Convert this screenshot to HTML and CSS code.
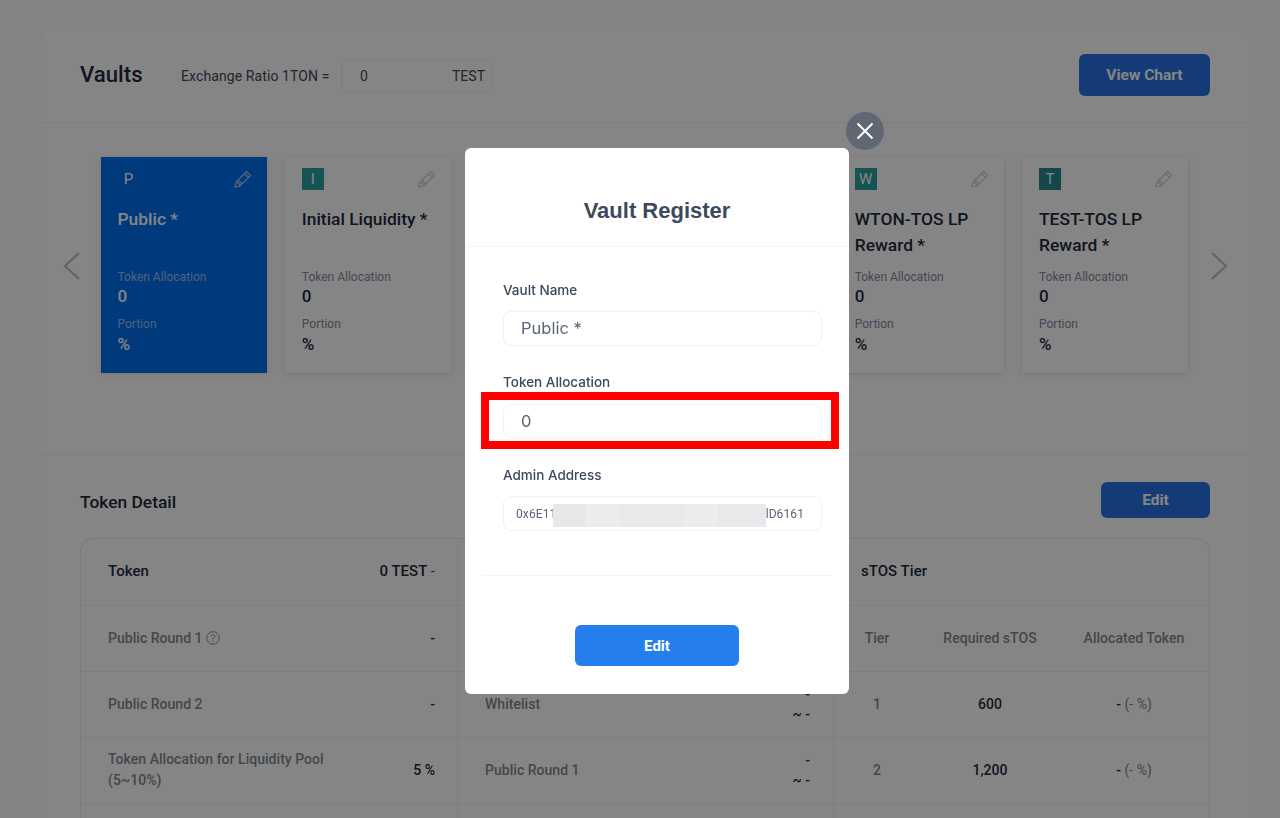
FILE: index.html
```html
<!DOCTYPE html>
<html lang="en">
<head>
    <meta charset="UTF-8">
    <meta name="viewport" content="width=device-width, initial-scale=1.0">
    <title>Vaults</title>
    <link rel="stylesheet" href="styles.css">
</head>
<body>

    <div class="panel">
        <!-- Vaults header -->
        <div class="vault-head">
            <h2 class="page-title">Vaults</h2>
            <span class="ratio-label">Exchange Ratio 1TON =</span>
            <div class="ratio-input"><span>0</span><span>TEST</span></div>
            <button class="btn-primary btn-chart">View Chart</button>
        </div>

        <!-- Vault cards -->
        <div class="carousel">
            <svg class="arrow" width="18" height="30" viewBox="0 0 18 30"><path d="M16 2 L2 15 L16 28" /></svg>
            <div class="cards">
                <div class="card card-active">
                    <div class="card-top">
                        <span class="badge">P</span>
                        <svg class="pencil" width="20" height="20" viewBox="0 0 20 20"><path d="M13.5 2.5 L17.5 6.5 L7 17 L2 18 L3 13 Z M11.5 4.5 L15.5 8.500 M5 11 L9 15 M3.500 12.500 L7.500 16.500" /></svg>
                    </div>
                    <div class="card-name">Public *</div>
                    <div class="card-label">Token Allocation</div>
                    <div class="card-value">0</div>
                    <div class="card-label card-label-second">Portion</div>
                    <div class="card-value">%</div>
                </div>
                <div class="card">
                    <div class="card-top">
                        <span class="badge">I</span>
                        <svg class="pencil" width="20" height="20" viewBox="0 0 20 20"><path d="M13.5 2.5 L17.5 6.5 L7 17 L2 18 L3 13 Z M11.5 4.5 L15.5 8.500 M5 11 L9 15 M3.500 12.500 L7.500 16.500" /></svg>
                    </div>
                    <div class="card-name">Initial Liquidity *</div>
                    <div class="card-label">Token Allocation</div>
                    <div class="card-value">0</div>
                    <div class="card-label card-label-second">Portion</div>
                    <div class="card-value">%</div>
                </div>
                <!-- these two sit behind the modal -->
                <div class="card"></div>
                <div class="card"></div>
                <div class="card">
                    <div class="card-top">
                        <span class="badge">W</span>
                        <svg class="pencil" width="20" height="20" viewBox="0 0 20 20"><path d="M13.5 2.5 L17.5 6.5 L7 17 L2 18 L3 13 Z M11.5 4.5 L15.5 8.500 M5 11 L9 15 M3.500 12.500 L7.500 16.500" /></svg>
                    </div>
                    <div class="card-name">WTON-TOS LP Reward *</div>
                    <div class="card-label">Token Allocation</div>
                    <div class="card-value">0</div>
                    <div class="card-label card-label-second">Portion</div>
                    <div class="card-value">%</div>
                </div>
                <div class="card">
                    <div class="card-top">
                        <span class="badge badge-dark">T</span>
                        <svg class="pencil" width="20" height="20" viewBox="0 0 20 20"><path d="M13.5 2.5 L17.5 6.5 L7 17 L2 18 L3 13 Z M11.5 4.5 L15.5 8.500 M5 11 L9 15 M3.500 12.500 L7.500 16.500" /></svg>
                    </div>
                    <div class="card-name">TEST-TOS LP Reward *</div>
                    <div class="card-label">Token Allocation</div>
                    <div class="card-value">0</div>
                    <div class="card-label card-label-second">Portion</div>
                    <div class="card-value">%</div>
                </div>
            </div>
            <svg class="arrow arrow-next" width="18" height="30" viewBox="0 0 18 30"><path d="M2 2 L16 15 L2 28" /></svg>
        </div>

        <!-- Token detail -->
        <div class="detail">
            <div class="detail-head">
                <h3 class="detail-title">Token Detail</h3>
                <button class="btn-primary btn-edit">Edit</button>
            </div>
            <div class="table">
                <div class="col col-token">
                    <div class="row row-head"><span class="strong">Token</span><span class="strong">0 TEST <span class="muted">-</span></span></div>
                    <div class="row"><span class="muted-label">Public Round 1
                        <svg class="help" width="14" height="14" viewBox="0 0 14 14"><circle cx="7" cy="7" r="6.300" /><path d="M5.200 5.400 C5.300 3.300 8.800 3.300 8.800 5.400 C8.800 6.800 7 6.800 7 8.500 M7 9.800 L7 10.800" /></svg></span><span class="strong">-</span></div>
                    <div class="row"><span class="muted-label">Public Round 2</span><span class="strong">-</span></div>
                    <div class="row"><span class="muted-label wide">Token Allocation for Liquidity Pool (5~10%)</span><span class="strong">5 %</span></div>
                </div>
                <div class="col col-sale">
                    <div class="row row-head"></div>
                    <div class="row"></div>
                    <div class="row"><span class="muted-label">Whitelist</span><span class="strong date">-<br>~ -</span></div>
                    <div class="row"><span class="muted-label">Public Round 1</span><span class="strong date">-<br>~ -</span></div>
                </div>
                <div class="col col-tier">
                    <div class="row row-head"><span class="strong">sTOS Tier</span></div>
                    <div class="row tier-row muted-label"><span>Tier</span><span>Required sTOS</span><span>Allocated Token</span></div>
                    <div class="row tier-row"><span class="muted-label">1</span><span class="strong">600</span><span><span class="strong">-</span> <span class="percent">(- %)</span></span></div>
                    <div class="row tier-row"><span class="muted-label">2</span><span class="strong">1,200</span><span><span class="strong">-</span> <span class="percent">(- %)</span></span></div>
                </div>
            </div>
        </div>
    </div>

    <!-- Vault Register modal -->
    <div class="overlay">
        <div class="modal">
            <button class="close-btn">
                <svg width="18" height="18" viewBox="0 0 18 18"><path d="M1.500 1.500 L16.500 16.500 M16.500 1.500 L1.500 16.500" /></svg>
            </button>
            <h2 class="modal-title">Vault Register</h2>
            <div class="modal-body">
                <label class="field-label">Vault Name</label>
                <div class="field">Public *</div>
                <label class="field-label">Token Allocation</label>
                <div class="field field-marked">0<span class="red-box"></span></div>
                <label class="field-label">Admin Address</label>
                <div class="field field-address"><span>0x6E11</span><span class="blurred"></span><span>lD6161</span></div>
            </div>
            <div class="modal-foot">
                <button class="btn-submit">Edit</button>
            </div>
        </div>
    </div>

</body>
</html>
```

FILE: styles.css
```css
* {
    box-sizing: border-box;
}
html, body {
    margin: 0;
    height: 818px;
    overflow: hidden;
}
body {
    font-family: Roboto, "Liberation Sans", sans-serif;
    background-color: #fafefc;
    color: #3d495d;
    padding: 30px 32px 0 42px;
}
button {
    font-family: inherit;
    border: none;
    color: white;
    font-weight: 700;
    cursor: pointer;
}
.panel {
    background: #ffffff;
    width: 1206px;
    height: 788px;
    border-radius: 12px 12px 0 0;
}

/* header */
.vault-head {
    height: 93px;
    display: flex;
    align-items: center;
    padding: 0 38px;
    border-bottom: 1px solid #eff1f6;
}
.page-title {
    margin: 0;
    width: 101px;
    font-size: 22.200px;
    font-weight: 500;
    color: #1f2a3c;
    position: relative;
    top: -2px;
}
.ratio-label {
    width: 160px;
    font-size: 14px;
    letter-spacing: 0.1px;
    color: #3d495d;
}
.ratio-input {
    width: 151px;
    height: 34px;
    border: 1px solid #eff1f6;
    border-radius: 6px;
    display: flex;
    justify-content: space-between;
    align-items: center;
    padding: 0 6px 0 18px;
    font-size: 14px;
    color: #3d495d;
}
.btn-primary {
    background-color: #2a72e5;
    border-radius: 6px;
    font-size: 15.500px;
}
.btn-chart {
    margin-left: auto;
    width: 131px;
    height: 42px;
    margin-top: -2px;
}

/* cards */
.carousel {
    height: 332px;
    display: flex;
    align-items: flex-start;
    padding: 34px 21px 0;
    border-bottom: 1px solid #eff1f6;
    gap: 19.500px;
}
.arrow {
    margin-top: 94px;
    flex: none;
}
.arrow-next {
    margin-left: 3px;
}
.arrow path {
    fill: none;
    stroke: #b8bcc9;
    stroke-width: 2;
}
.cards {
    display: flex;
    gap: 18.300px;
    flex: none;
}
.card {
    width: 166px;
    height: 216px;
    flex: none;
    padding: 11px 17px;
    background: white;
    box-shadow: 0 1px 6px rgba(61, 73, 93, 0.16);
    color: #1f2a3c;
}
.card-active {
    background: #0070ed;
    color: #fff;
}
.card-top {
    height: 22px;
    display: flex;
    justify-content: space-between;
    align-items: center;
}
.badge {
    width: 22px;
    height: 22px;
    background: #2ba1a0;
    color: #fff;
    font-size: 15px;
    display: flex;
    align-items: center;
    justify-content: center;
}
.badge-dark {
    background: #26898f;
}
.card-active .badge {
    background: transparent;
}
.pencil {
    margin-right: -3px;
}
.pencil path {
    fill: none;
    stroke: #c9cdd5;
    stroke-width: 1.200;
}
.card-active .pencil path {
    stroke: #b5c4dc;
}
.card-name {
    margin-top: 16px;
    height: 52px;
    font-size: 17.400px;
    font-weight: 500;
    line-height: 26px;
    margin-bottom: 11px;
}
.card-label {
    font-size: 12px;
    line-height: 16px;
    color: #7e8a9e;
}
.card-active .card-label {
    color: #97bdf0;
}
.card-label-second {
    margin-top: 9px;
    margin-bottom: 1px;
}
.card-value {
    font-size: 17px;
    font-weight: 500;
    line-height: 22px;
}

/* token detail */
.detail {
    padding: 0 38px;
}
.detail-head {
    height: 83px;
    display: flex;
    justify-content: space-between;
    align-items: center;
    padding-top: 6px;
}
.detail-title {
    margin: 4px 0 0;
    font-size: 17.400px;
    font-weight: 500;
    color: #1f2a3c;
}
.btn-edit {
    width: 109px;
    height: 36px;
}
.table {
    display: grid;
    grid-template-columns: 376px 376px 1fr;
    height: 280px;
    border: 1px solid #e6eaee;
    border-bottom: none;
    border-radius: 14px 14px 0 0;
}
.col + .col {
    border-left: 1px solid #eff1f6;
}
.row {
    height: 66px;
    display: flex;
    justify-content: space-between;
    align-items: center;
    padding: 0 22px 2px 27px;
    border-bottom: 1px solid #eff1f6;
    font-size: 14px;
    letter-spacing: 0.03px;
}
.col .row-head {
    height: 67px;
    font-size: 15px;
}
.strong {
    font-weight: 500;
    color: #1f2a3c;
}
.muted {
    color: #3d495d;
    font-weight: 400;
}
.muted-label {
    font-weight: 500;
    color: #808992;
}
.wide {
    width: 240px;
    line-height: 21px;
}
.date {
    text-align: right;
    line-height: 20px;
}
.help {
    vertical-align: -2px;
}
.help circle, .help path {
    fill: none;
    stroke: #808992;
    stroke-width: 1;
}
.col-sale .row {
    padding: 0 23px 2px 27px;
}
.col-tier .row {
    padding: 0 0 2px 27px;
}
.col-tier .tier-row {
    display: grid;
    grid-template-columns: 40px 184px 102px;
    column-gap: 1px;
    justify-content: start;
    text-align: center;
    white-space: nowrap;
    padding-left: 23px;
}
.percent {
    color: #808992;
    font-weight: 400;
}

/* modal */
.overlay {
    position: fixed;
    inset: 0;
    background: rgba(0, 0, 0, 0.48);
}
.modal {
    position: absolute;
    left: 465px;
    top: 148px;
    width: 384px;
    height: 546px;
    background: white;
    border-radius: 6px;
    display: flex;
    flex-direction: column;
}
.close-btn {
    position: absolute;
    top: -36px;
    right: -35px;
    width: 38px;
    height: 38px;
    border-radius: 50%;
    background: #5f6773;
    padding: 0;
    display: flex;
    align-items: center;
    justify-content: center;
}
.close-btn path {
    stroke: white;
    stroke-width: 2;
    fill: none;
}
.modal-title {
    margin: 0;
    height: 99px;
    padding-top: 49px;
    text-align: center;
    font-family: "Liberation Sans", Arial, sans-serif;
    font-size: 22px;
    font-weight: 700;
    color: #3d495d;
    line-height: 27px;
    border-bottom: 1px solid #f4f6f8;
}
.modal-body {
    padding: 35px 27px 0 38px;
    height: 329px;
    display: flex;
    flex-direction: column;
    position: relative;
}
.modal-body::after {
    content: "";
    position: absolute;
    left: 16px;
    right: 17px;
    bottom: 0;
    border-bottom: 1px solid #f4f6f8;
}
.field-label {
    font-family: Inter, sans-serif;
    font-size: 13.500px;
    font-weight: 500;
    line-height: 17px;
    color: #3d495d;
}
.field {
    margin-top: 12px;
    margin-bottom: 28px;
    height: 35px;
    flex: none;
    border: 1px solid #eff1f6;
    border-radius: 8px;
    font-family: Inter, sans-serif;
    font-size: 16.500px;
    color: #5a6577;
    padding: 0 0 1px 17px;
    display: flex;
    align-items: center;
    position: relative;
}
.field-marked {
    margin-top: 13px;
    margin-bottom: 29px;
    height: 34px;
}
.field-address {
    font-family: Roboto, sans-serif;
    font-size: 12px;
    letter-spacing: 0.1px;
    padding: 0 17px 0 12px;
    justify-content: space-between;
    margin-bottom: 0;
}
.blurred {
    position: absolute;
    left: 49px;
    top: 7px;
    width: 213px;
    height: 23px;
    background: linear-gradient(90deg, #e7e8ea 0 33px, #ebecee 33px 66px, #e9eaec 66px 132px, #ebecee 132px 165px, #e8e9eb 165px);
}
.red-box {
    position: absolute;
    left: -23px;
    top: -13px;
    width: 358px;
    height: 57px;
    border: 8px solid #ff0000;
}
.modal-foot {
    display: flex;
    justify-content: center;
    padding-top: 49px;
}
.btn-submit {
    width: 164px;
    height: 41px;
    border-radius: 6px;
    background: #257eee;
    font-size: 15px;
}
```
